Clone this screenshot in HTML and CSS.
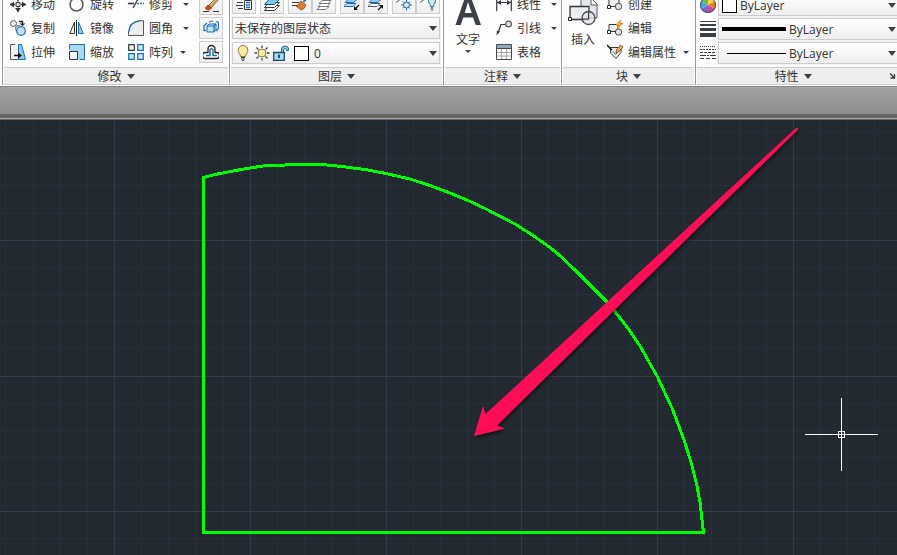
FILE: index.html
```html
<!DOCTYPE html>
<html lang="zh-CN">
<head>
    <meta charset="UTF-8">
    <meta name="viewport" content="width=device-width, initial-scale=1.0">
    <title>CAD</title>
    <link rel="stylesheet" href="styles.css">
</head>
<body>
    <!-- Ribbon -->
    <header class="ribbon">
        <div class="panel-edge"></div>

        <!-- Modify -->
        <section class="panel modify">
            <div class="panel-body">
                <div class="tools">
                    <button class="tool"><svg class="icon" viewBox="0 0 16 16"><path d="M8 0v16M0 8.500h16" stroke="#33363d" stroke-width="1.500"/><path d="M0 8.500l4-3v6zM16 8.500l-4-3v6zM8 16l-3-4h6zM8 1L5 4h6z" fill="#33363d"/><path d="M5 5.500h6v6H5z" fill="#fff"/><path d="M6 6.500h4v4H6z" fill="#ddd" stroke="#33363d"/></svg>移动</button>
                    <button class="tool"><svg class="icon" viewBox="0 0 16 16"><circle cx="7.500" cy="8.500" r="6.500" fill="none" stroke="#55585e" stroke-width="1.500"/></svg>旋转</button>
                    <button class="tool"><svg class="icon" viewBox="0 0 16 16"><path d="M0 7.500h6M5 12l5-9" stroke="#33363d" stroke-width="1.300" fill="none"/><path d="M9 7.500h7" stroke="#1c6cb8" stroke-width="1.300" stroke-dasharray="2 1"/></svg>修剪<i class="caret small push"></i></button>
                    <button class="box" aria-label="删除"><svg class="icon" viewBox="0 0 16 16"><path d="M0 15.500h6M10 15.500h6" stroke="#33363d"/><path d="M14 1l2 2-8 9-3-2z" fill="#e2ad62" stroke="#55401f" stroke-width=".8"/><path d="M5 9l3.500 3-2 2-3.500-.5-.5-2z" fill="#d4481f" stroke="#7c2a10" stroke-width=".7"/></svg></button>

                    <button class="tool"><svg class="icon" viewBox="0 0 16 16"><circle cx="3.500" cy="3.500" r="3" fill="#eee" stroke="#55585e"/><circle cx="8.500" cy="8.500" r="3" fill="#eee" stroke="#55585e"/><circle cx="11" cy="11" r="4.300" fill="#bfe3f5" stroke="#2175b5" stroke-width="1.300"/><path d="M9 1.500h3.500V4" fill="none" stroke="#222" stroke-width="1.300"/><path d="M9.500 3.500h6l-3 2.500z" fill="#222"/></svg>复制</button>
                    <button class="tool"><svg class="icon" viewBox="0 0 16 16"><path d="M5.500 2v11.500H.8z" fill="#eee" stroke="#33363d"/><path d="M7.500 0v16" stroke="#222"/><path d="M9.500 2v11.500h4.700z" fill="#8fc9ea" stroke="#1c6cb8"/></svg>镜像</button>
                    <button class="tool"><svg class="icon" viewBox="0 0 16 16"><path d="M.5 15.500V12Q1.500 2 12 .7h3.500v14.800z" fill="#ececef"/><path d="M.5 12v3.500h15V.7H12" fill="none" stroke="#55585e"/><path d="M.7 12Q1.500 2 12 .8" fill="none" stroke="#1c6cb8" stroke-width="1.400"/></svg>圆角<i class="caret small push"></i></button>
                    <button class="box" aria-label="分解"><svg class="icon" viewBox="0 0 16 16"><path d="M4 6l2-2h7v6l-2 2H4z" fill="#bfe3f5" stroke="#1c6cb8"/><path d="M4 6h7v6M11 6l2-2M1 11V6l3-3M1 11l2-1M13 1.500l2.500 1v6L13 11M6 2l4-1" fill="none" stroke="#1c6cb8" stroke-width="1.200"/></svg></button>

                    <button class="tool"><svg class="icon" viewBox="0 0 16 16"><path d="M8.500.5h3l4 15h-7z" fill="#8fc9ea" stroke="#1c6cb8"/><path d="M.5 15.500V.5H5M.5 15.500H8" fill="none" stroke="#55585e"/><path d="M1 1h4l3 6v8H1z" fill="#f2f2f4"/><path d="M4 11.500h5" stroke="#111" stroke-width="1.500"/><path d="M8 8.500l4 3-4 3z" fill="#111"/></svg>拉伸</button>
                    <button class="tool"><svg class="icon" viewBox="0 0 16 16"><path d="M.5.5h15v15h-7v-8h-8z" fill="#a9d8f0"/><path d="M.5 5.500v-5h15v15h-5" fill="none" stroke="#1c6cb8"/><path d="M.5 7.500h8v8h-8z" fill="#f6f6f8" stroke="#33363d"/></svg>缩放</button>
                    <button class="tool"><svg class="icon" viewBox="0 0 16 16"><path d="M.7.7h5.600v5.600H.7z" fill="#eee" stroke="#33363d" stroke-width="1.200"/><path d="M9.700.7h5.600v5.600H9.700zM.7 9.700h5.600v5.600H.7zM9.700 9.700h5.600v5.600H9.700z" fill="#c9e8f7" stroke="#1c6cb8" stroke-width="1.200"/></svg>阵列<i class="caret small"></i></button>
                    <button class="box" aria-label="偏移"><svg class="icon" viewBox="0 0 16 16"><path d="M5 8.500V5a3 3 0 0 1 7 0v3.500h1.500a2.500 2.500 0 0 1 0 6h-11a2.500 2.500 0 0 1 0-6z" fill="#fff" stroke="#222" stroke-width="1.300"/><path d="M3 11.500h4V6q1.500-2.500 3 0v5.500h4" fill="none" stroke="#1c6cb8" stroke-width="1.400"/></svg></button>
                </div>
            </div>
            <button class="panel-title">修改<i class="caret"></i></button>
        </section>

        <!-- Layers -->
        <section class="panel layers">
            <div class="panel-body stacked">
                <div class="layer-tools">
                    <button class="box" aria-label="图层特性"><svg class="icon" viewBox="0 0 16 16"><path d="M0 4.500h8M1 7.500h6M0 10.500h7M2 13.500h5" stroke="#33363d"/><path d="M8.500 5.500h7v9h-7z" fill="#fff" stroke="#33363d"/><path d="M10 7.500h4M10 10h4M10 12.500h4" stroke="#1c6cb8" stroke-width="1.400"/></svg></button>
                    <button class="box" aria-label="置为当前"><svg class="icon" viewBox="0 0 16 16"><path d="M5 10.500h10.500l-5 5H.5z" fill="#fff" stroke="#33363d"/><path d="M5 7.500h10.500l-5 5H.5z" fill="#fff" stroke="#33363d"/><path d="M5 4.500h10.500l-5 5H.5z" fill="#7fc2e8" stroke="#174f7d"/></svg></button>
                    <div class="pair">
                        <button class="box" aria-label="匹配图层"><svg class="icon" viewBox="0 0 16 16"><path d="M0 4.500h9M0 7.500h7M0 10.500h5" stroke="#33363d"/><path d="M15.500 2l-4 5" stroke="#2175b5" stroke-width="2"/><path d="M9 6l5 4q-1 4-5 5l-5-4q3-1 5-5z" fill="#d9812e" stroke="#8a4612" stroke-width=".8"/></svg></button>
                        <button class="box" aria-label="上一个"><svg class="icon" viewBox="0 0 16 16"><path d="M4 11.500h9l-3 3H1zM5 8.500h9l-3 3H2zM6 5.500h9l-3 3H3z" fill="#fff" stroke="#77797f"/></svg></button>
                    </div>
                    <div class="pair">
                        <button class="box" aria-label="隔离"><svg class="icon" viewBox="0 0 16 16"><path d="M3 8.500h9l-3 3H0z" fill="#bfe3f5" stroke="#1c6cb8"/><path d="M4 4.500h9l-3 3H1z" fill="#8fc9ea" stroke="#1c6cb8"/><path d="M15 10l-4 4" stroke="#111" stroke-width="1.300"/><path d="M10 11v4h4z" fill="#111"/></svg></button>
                        <button class="box" aria-label="取消隔离"><svg class="icon" viewBox="0 0 16 16"><path d="M3 8.500h9l-3 3H0z" fill="#fff" stroke="#55585e"/><path d="M4 4.500h9l-3 3H1z" fill="#8fc9ea" stroke="#1c6cb8"/><path d="M10 15l4-4" stroke="#111" stroke-width="1.300"/><path d="M11 10h4v4z" fill="#111"/></svg></button>
                    </div>
                    <div class="pair">
                        <button class="box" aria-label="冻结"><svg class="icon" viewBox="0 0 16 16"><path d="M0 7.500l4-3h8" fill="none" stroke="#55585e"/><circle cx="10.500" cy="10" r="3" fill="#dff1fa" stroke="#1c6cb8"/><path d="M10.500 4.500v3M10.500 13v2.500M5 10h3M13 10h3M6.800 6.500l2 2M14 6.500l-2 2M6.800 13.500l2-2M14 13.500l-2-2" stroke="#1c6cb8"/></svg></button>
                        <button class="box" aria-label="关闭"><svg class="icon" viewBox="0 0 16 16"><path d="M0 7.500l4-3h6" fill="none" stroke="#55585e"/><path d="M10.500 11.500q0-2-1.500-3.500a3.500 3.500 0 1 1 6 0q-1.500 1.500-1.500 3.500z" fill="#c9e8f7" stroke="#2175b5"/><path d="M10.500 13h3M11 15h2" stroke="#33363d"/></svg></button>
                    </div>
                </div>
                <div class="combo">
                    <select aria-label="图层状态"><option>未保存的图层状态</option></select>
                </div>
                <div class="combo">
                    <svg class="icon" viewBox="0 0 16 16"><path d="M5.500 11.500q0-1.500-1.700-3.800a4.800 4.800 0 1 1 8.400 0q-1.700 2.300-1.700 3.800z" fill="#ffe9a0" stroke="#8b7444"/><path d="M6 12.500h4M6 14h4M7 15.500h2" stroke="#444"/></svg>
                    <svg class="icon" viewBox="0 0 16 16"><path d="M8 .5V3M8 13v2.500M.5 8H3M13 8h2.500M2.500 2.500l2 2M11.500 11.500l2 2M13.500 2.500l-2 2M4.500 11.500l-2 2" stroke="#444" stroke-width="1.300"/><circle cx="8" cy="8" r="4" fill="#ffeaa5" stroke="#8b7444"/></svg>
                    <svg class="icon" viewBox="0 0 16 16"><path d="M8.500 7.500V4a3.500 3 0 0 1 7 0v1.500h-2V4.500q-1.500-2-3 0v3" fill="#8fc9ea" stroke="#155a80" stroke-width=".9"/><path d="M.7 7.500h10.600v7.800H.7z" fill="#a9dcf0" stroke="#124d70" stroke-width="1.300"/><path d="M6 9.500v3.500" stroke="#111" stroke-width="1.400"/></svg>
                    <span class="swatch"></span>
                    <select aria-label="图层"><option>0</option></select>
                </div>
            </div>
            <button class="panel-title">图层<i class="caret"></i></button>
        </section>

        <!-- Annotation -->
        <section class="panel annotation">
            <div class="panel-body">
                <button class="big-tool">
                    <svg class="big-icon" viewBox="0 0 32 32"><path d="M3.500 31L13.500 2h5l10.500 29h-5.300l-2.600-7.500h-9.800L8.700 31zM12.700 19h7L16 8z" fill="#3c4147"/></svg>
                    文字<i class="caret small"></i>
                </button>
                <div class="tool-list">
                    <button class="tool"><svg class="icon" viewBox="0 0 16 16"><path d="M.7 1v14M15.300 1v14M1 6.500h14" stroke="#33363d" fill="none" stroke-width="1.200"/><path d="M1 6.500l4-2.500v5zM15 6.500l-4-2.500v5z" fill="#33363d"/></svg>线性<i class="caret small push"></i></button>
                    <button class="tool"><svg class="icon" viewBox="0 0 16 16"><path d="M2 13l3-8.500h5" fill="none" stroke="#33363d" stroke-width="1.200"/><path d="M.5 15.500l.5-5 3 1z" fill="#33363d"/><circle cx="12.500" cy="4" r="2.900" fill="#e4e4e8" stroke="#55585e" stroke-width="1.200"/></svg>引线<i class="caret small push"></i></button>
                    <button class="tool"><svg class="icon" viewBox="0 0 16 16"><path d="M.5.5h15v15H.5z" fill="#fff" stroke="#44484f"/><path d="M1 1h14v3H1z" fill="#8fa8c4"/><path d="M1 4.500h14" stroke="#44484f"/><path d="M1 8.500h14M1 12h14M5.500 5v10M10.500 5v10" stroke="#a9a9b0"/></svg>表格</button>
                </div>
            </div>
            <button class="panel-title">注释<i class="caret"></i></button>
        </section>

        <!-- Block -->
        <section class="panel block">
            <div class="panel-body">
                <button class="big-tool">
                    <svg class="big-icon" viewBox="0 0 32 32"><path d="M14 5h11l5 5v14H14z" fill="#e6e7ec" stroke="#55585e"/><path d="M24 5v6h6" fill="#fff" stroke="#55585e"/><path d="M3 12.500h19v13H3z" fill="#eceef2" stroke="#33363d" stroke-width="1.300"/><circle cx="21.500" cy="24" r="6.500" fill="#dfe0e6" fill-opacity=".7" stroke="#44484f" stroke-width="1.300"/><path d="M21.500 18v7h-6" fill="none" stroke="#33363d"/><path d="M1.500 23.500h3v3h-3z" fill="#fff" stroke="#222"/></svg>
                    插入
                </button>
                <div class="tool-list">
                    <button class="tool"><svg class="icon" viewBox="0 0 16 16"><path d="M2 2.500h10v8H2z" fill="#eee" stroke="#33363d"/><circle cx="11.500" cy="10.500" r="3.200" fill="#e0e0e6" stroke="#44484f"/><path d="M.5 9.500h3v3h-3z" fill="#fff" stroke="#222"/></svg>创建</button>
                    <button class="tool"><svg class="icon" viewBox="0 0 16 16"><path d="M2 4.500h9v7H2z" fill="#eee" stroke="#33363d"/><circle cx="11.500" cy="12" r="3.200" fill="#e0e0e6" stroke="#44484f"/><path d="M.5 10.500h3v3h-3z" fill="#fff" stroke="#222"/><path d="M13.500 0L9 5h3l-1.500 4L16 3.500h-3z" fill="#ffc63a" stroke="#d9741b" stroke-width=".8"/></svg>编辑</button>
                    <button class="tool"><svg class="icon" viewBox="0 0 16 16"><path d="M3 3.500h11v5L9 14.500 4 9.500z" fill="#eee" stroke="#33363d"/><path d="M0 1l5 5" stroke="#111" stroke-width="1.300"/><path d="M6 7.500l2.500 3L11 8" fill="none" stroke="#1c6cb8"/><path d="M13.500 1L16 3l-4.500 5-2.500 1 .5-3z" fill="#efae4b" stroke="#9b4a19" stroke-width=".9"/></svg>编辑属性<i class="caret small"></i></button>
                </div>
            </div>
            <button class="panel-title">块<i class="caret"></i></button>
        </section>

        <!-- Properties -->
        <section class="panel properties">
            <div class="panel-body stacked">
                <div class="property">
                    <svg class="icon" viewBox="0 0 16 16"><path d="M8 8V0A8 8 0 0 1 15 4z" fill="#f3d83c"/><path d="M8 8l7-4a8 8 0 0 1 0 8z" fill="#ef7a25"/><path d="M8 8l7 4a8 8 0 0 1-7 4z" fill="#c04c9d"/><path d="M8 8v8a8 8 0 0 1-7-4z" fill="#7766cf"/><path d="M8 8l-7 4a8 8 0 0 1 0-8z" fill="#48a6df"/><path d="M8 8L1 4a8 8 0 0 1 7-4z" fill="#66bd45"/><circle cx="8" cy="8" r="7.500" fill="none" stroke="#55585e"/></svg>
                    <div class="combo">
                        <span class="swatch"></span>
                        <select aria-label="对象颜色"><option>ByLayer</option></select>
                    </div>
                </div>
                <div class="property">
                    <svg class="icon" viewBox="0 0 16 16"><path d="M0 0h16v1H0zM0 3h16v2H0zM0 7h16v3H0zM0 12h16v4H0z" fill="#3a3e45"/></svg>
                    <div class="combo">
                        <span class="line thick"></span>
                        <select aria-label="线宽"><option>ByLayer</option></select>
                    </div>
                </div>
                <div class="property">
                    <svg class="icon" viewBox="0 0 16 16"><g stroke="#3a3e45"><path d="M0 1.500h16" stroke-dasharray="1 1"/><path d="M0 4.500h16" stroke-dasharray="2 1"/><path d="M0 7.500h16" stroke-dasharray="3 1"/><path d="M0 10.500h16" stroke-dasharray="6 1 2 1"/><path d="M0 13.500h16" stroke-dasharray="4 2"/></g></svg>
                    <div class="combo">
                        <span class="line thin"></span>
                        <select aria-label="线型"><option>ByLayer</option></select>
                    </div>
                </div>
            </div>
            <div class="title-row">
                <button class="panel-title">特性<i class="caret"></i></button>
                <button class="launcher" aria-label="特性选项板"><svg viewBox="0 0 8 8"><path d="M1 1.500l4 4" stroke="#33363d" stroke-width="1.300"/><path d="M5.500 2v4h-4" fill="none" stroke="#33363d" stroke-width="1.300"/></svg></button>
            </div>
        </section>
    </header>

    <div class="tab-bar"></div>

    <!-- Drawing area -->
    <main class="canvas">
        <svg class="drawing">
            <defs>
                <filter id="shadow" x="-10%" y="-10%" width="120%" height="120%">
                    <feDropShadow dx="1" dy="2" stdDeviation="2" flood-color="#000" flood-opacity=".6"/>
                </filter>
            </defs>
            <path id="minor" class="grid-minor"/>
            <path id="major" class="grid-major"/>
            <path class="shape" d="M203.500 412.500V57.500L215 54.500 233 51 250 48 263 46 285 45 296 44.500H320L333 45.500 346 47 368 50 386 53.500 410 59 430 65.500 450 73 469 81 485 88.500 515 104 533 115.500 548 126 558 134 575 150 593 168 608 183 627 207 640 226 657 256 672 288 684 320 691 342 697 366 700 382 702 400 703.500 412.500Z"/>
            <path class="arrow" filter="url(#shadow)" d="M474 316L483 286 485.500 294 796.500 7.500Q798.500 7 798 9.500L497 305.500 505 308.500Z"/>
            <path class="crosshair" d="M805 314.500h73M841.500 278v73M838.500 311.500h6v6h-6z"/>
        </svg>
    </main>

    <script>
        // Grid lines, every fifth one is a major line
        const step = 27.15;

        function drawGrid() {
            const canvas = document.querySelector('.canvas');
            const w = canvas.clientWidth;
            const h = canvas.clientHeight;
            let minor = '';
            let major = '';

            for (let i = 0; 5.95 + i * step < w; i++) {
                const line = `M${Math.floor(5.95 + i * step) + 0.5} 0V${h}`;
                if (i % 5 === 4) major += line; else minor += line;
            }
            for (let i = 0; 11.67 + i * step < h; i++) {
                const line = `M0 ${Math.floor(11.67 + i * step) + 0.5}H${w}`;
                if (i % 5 === 4) major += line; else minor += line;
            }

            document.getElementById('minor').setAttribute('d', minor);
            document.getElementById('major').setAttribute('d', major);
        }

        drawGrid();
        window.addEventListener('resize', drawGrid);
    </script>
</body>
</html>
```
FILE: styles.css
```css
* {
    margin: 0;
    padding: 0;
    box-sizing: border-box;
}

body {
    font-family: "Open Sans", "Noto Sans CJK SC", sans-serif;
    font-size: 12px;
    color: #333;
    height: 100vh;
    display: flex;
    flex-direction: column;
    overflow: hidden;
}

button,
select {
    font: inherit;
    color: inherit;
    background: none;
    border: none;
    cursor: pointer;
}

/* Ribbon */
.ribbon {
    display: flex;
    background-color: #fdfdfd;
    border-bottom: 1px solid #fff;
}

.panel-edge {
    width: 2px;
    flex-shrink: 0;
}

.panel {
    display: flex;
    flex-direction: column;
    flex-shrink: 0;
    border-left: 1px solid #999;
    padding: 0 1px;
}

.modify {
    width: 227px;
}

.layers {
    width: 214px;
}

.annotation {
    width: 118px;
}

.block {
    width: 134px;
}

.properties {
    flex: 1;
    padding-right: 0;
}

.panel-body {
    height: 67px;
    padding-bottom: 3px;
    display: flex;
    align-items: flex-end;
    overflow: hidden;
}

.panel-title {
    flex: 1;
    height: 18px;
    line-height: 15px;
    padding-top: 1px;
    display: flex;
    align-items: center;
    justify-content: center;
    gap: 5px;
    background-color: #eee;
    border-top: 1px solid #ccc;
    border-bottom: 1px solid #ccc;
}

.title-row {
    display: flex;
    background-color: #eee;
}

.launcher {
    width: 8px;
    border-top: 1px solid #ccc;
    border-bottom: 1px solid #ccc;
}

.launcher svg {
    width: 8px;
    height: 8px;
    display: block;
}

.caret {
    width: 0;
    height: 0;
    border: 4px solid transparent;
    border-top: 5px solid #3c4147;
    border-bottom: none;
}

.caret.small {
    border-width: 3px 3px 0;
}

.tool .caret {
    margin-left: 2px;
}

.tool .caret.push {
    margin-left: 5px;
}

/* Tool buttons */
.icon {
    width: 16px;
    height: 16px;
    flex-shrink: 0;
}

.tools {
    display: grid;
    grid-template-columns: 59px 59px 71px 24px;
    grid-auto-rows: 24px;
    align-items: center;
    padding-left: 6px;
}

.tool {
    height: 24px;
    display: flex;
    align-items: center;
    gap: 5px;
    white-space: nowrap;
}

.box {
    width: 24px;
    height: 22px;
    display: flex;
    align-items: center;
    justify-content: center;
    background: linear-gradient(#fbfbfb, #f0f0f0);
    border: 1px solid #ccc;
}

.big-tool {
    display: flex;
    flex-direction: column;
    align-items: center;
    width: 40px;
    height: 70px;
    line-height: 20px;
}

.big-icon {
    width: 32px;
    height: 32px;
    flex-shrink: 0;
    margin-bottom: 4px;
}

.annotation .big-tool {
    margin: 0 8px 0 3px;
}

.block .big-tool {
    margin-right: 4px;
}

/* Layers and properties */
.stacked {
    flex-direction: column;
    justify-content: flex-end;
    align-items: stretch;
    gap: 3px;
}

.layers .stacked {
    padding-left: 1px;
    padding-right: 2px;
}

.properties .stacked {
    padding-left: 3px;
    gap: 2px;
}

.layer-tools {
    display: flex;
    gap: 4px;
}

.pair {
    display: flex;
}

.combo {
    flex: 1 0 auto;
    height: 22px;
    max-height: 22px;
    display: flex;
    align-items: center;
    gap: 3px;
    padding: 0 2px;
    background: linear-gradient(#fff, #eee);
    border: 1px solid #ccc;
    box-shadow: 0 0 0 1px #f4f4f4;
}

.combo::after {
    content: "";
    border: 4px solid transparent;
    border-top: 5px solid #3c4147;
    border-bottom: none;
    pointer-events: none;
}

.combo select {
    flex: 1;
    min-width: 0;
    height: 20px;
    appearance: none;
}

.swatch {
    width: 15px;
    height: 15px;
    flex-shrink: 0;
    background-color: #fff;
    border: 1px solid #000;
}

.layers .swatch {
    margin: 0 2px;
}

.property {
    display: flex;
    align-items: center;
    gap: 2px;
}

.properties .combo {
    border-right: none;
    padding-left: 3px;
    padding-right: 1px;
}

.line {
    width: 64px;
    flex-shrink: 0;
    background-color: #000;
}

.line.thick {
    height: 4px;
}

.line.thin {
    height: 1px;
    width: 59px;
    margin-left: 5px;
}

/* Strip between the ribbon and the drawing */
.tab-bar {
    height: 34px;
    flex-shrink: 0;
    background: linear-gradient(#a3a3a3, #8d8d8d) 0 0 / 100% 27px no-repeat, #666;
    border-top: 1px solid #888;
    border-bottom: 1px solid #666;
    box-shadow: inset 0 -1px #aaa;
}

/* Drawing area */
.canvas {
    flex: 1;
    min-height: 0;
    background-color: #222930;
}

.drawing {
    display: block;
    width: 100%;
    height: 100%;
    fill: none;
}

.grid-minor {
    stroke: #272f3a;
}

.grid-major {
    stroke: #333b4c;
}

.shape {
    stroke: #0f0;
    stroke-width: 3px;
    shape-rendering: crispEdges;
}

.arrow {
    fill: #ff0f57;
}

.crosshair {
    stroke: #fff;
    shape-rendering: crispEdges;
}
```
